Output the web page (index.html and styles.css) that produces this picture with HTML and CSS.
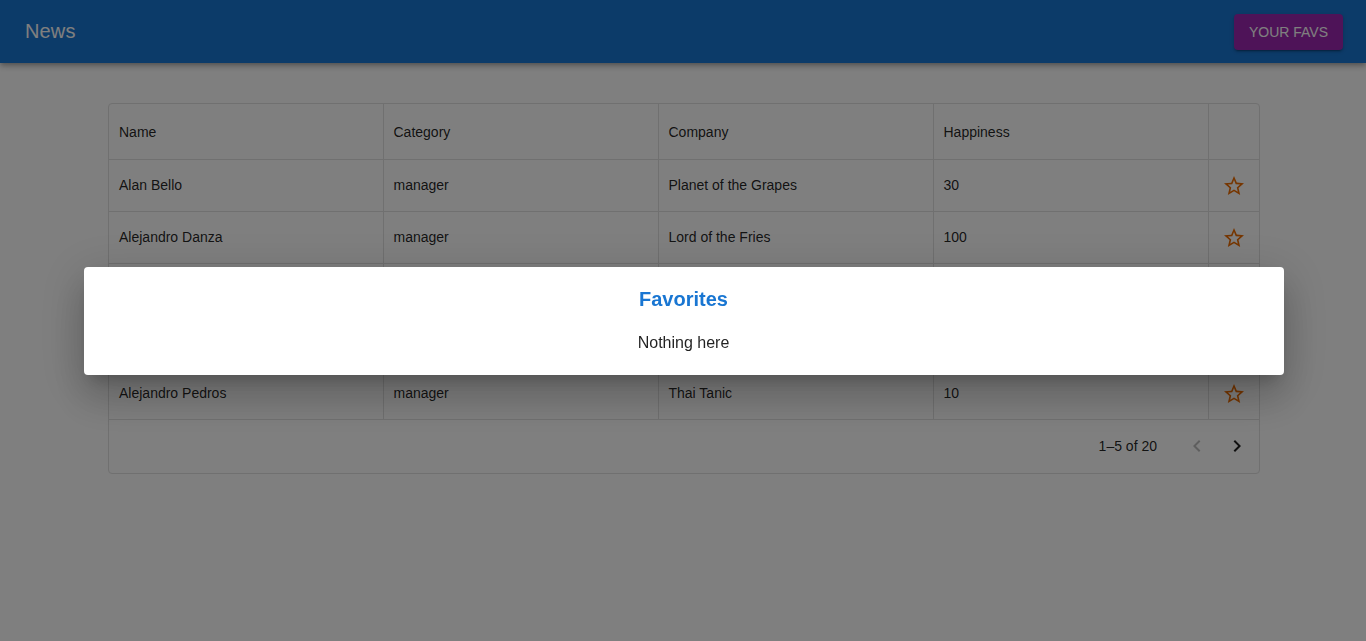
FILE: index.html
```html
<!DOCTYPE html>
<html lang="en">
<head>
<meta charset="utf-8">
<title>News</title>
<link rel="stylesheet" href="styles.css">
</head>
<body>
<header class="appbar">
  <div class="toolbar">
    <h1 class="brand">News</h1>
    <button class="btn-favs">Your favs</button>
  </div>
</header>
<main class="content">
  <div class="paper">
    <table class="grid">
      <colgroup>
        <col class="c-first"><col class="c-wide"><col class="c-wide"><col class="c-wide"><col class="c-star">
      </colgroup>
      <thead>
        <tr><th>Name</th><th>Category</th><th>Company</th><th>Happiness</th><th></th></tr>
      </thead>
      <tbody>
        <tr><td>Alan Bello</td><td>manager</td><td>Planet of the Grapes</td><td>30</td><td class="star"><svg viewBox="0 0 24 24" width="24" height="24"><path d="M22 9.24l-7.19-.62L12 2 9.19 8.63 2 9.24l5.46 4.73L5.82 21 12 17.27 18.18 21l-1.63-7.03L22 9.24zM12 15.4l-3.76 2.27 1-4.28-3.32-2.88 4.38-.38L12 6.1l1.71 4.04 4.38.38-3.32 2.88 1 4.28L12 15.4z"/></svg></td></tr>
        <tr><td>Alejandro Danza</td><td>manager</td><td>Lord of the Fries</td><td>100</td><td class="star"><svg viewBox="0 0 24 24" width="24" height="24"><path d="M22 9.24l-7.19-.62L12 2 9.19 8.63 2 9.24l5.46 4.73L5.82 21 12 17.27 18.18 21l-1.63-7.03L22 9.24zM12 15.4l-3.76 2.27 1-4.28-3.32-2.88 4.38-.38L12 6.1l1.71 4.04 4.38.38-3.32 2.88 1 4.28L12 15.4z"/></svg></td></tr>
        <tr><td></td><td></td><td></td><td></td><td></td></tr>
        <tr><td></td><td></td><td></td><td></td><td></td></tr>
        <tr><td>Alejandro Pedros</td><td>manager</td><td>Thai Tanic</td><td>10</td><td class="star"><svg viewBox="0 0 24 24" width="24" height="24"><path d="M22 9.24l-7.19-.62L12 2 9.19 8.63 2 9.24l5.46 4.73L5.82 21 12 17.27 18.18 21l-1.63-7.03L22 9.24zM12 15.4l-3.76 2.27 1-4.28-3.32-2.88 4.38-.38L12 6.1l1.71 4.04 4.38.38-3.32 2.88 1 4.28L12 15.4z"/></svg></td></tr>
      </tbody>
    </table>
    <div class="pager">
      <span class="pager-count">1–5 of 20</span>
      <div class="pager-actions">
        <button class="pager-btn disabled" aria-label="Previous page"><svg viewBox="0 0 24 24" width="24" height="24"><path d="M15.41 16.59L10.83 12l4.58-4.59L14 6l-6 6 6 6 1.41-1.41z"/></svg></button>
        <button class="pager-btn" aria-label="Next page"><svg viewBox="0 0 24 24" width="24" height="24"><path d="M8.59 16.59L13.17 12 8.59 7.41 10 6l6 6-6 6-1.41-1.41z"/></svg></button>
      </div>
    </div>
  </div>
</main>
<div class="backdrop">
  <div class="dialog" role="dialog">
    <h2 class="dialog-title">Favorites</h2>
    <p class="dialog-text">Nothing here</p>
  </div>
</div>
</body>
</html>
```

FILE: styles.css
```css
* { box-sizing: border-box; }
html, body { margin: 0; padding: 0; }
body {
  font-family: "Liberation Sans", Arial, sans-serif;
  background: #fff;
  color: rgba(0,0,0,0.87);
  height: 641px;
  overflow: hidden;
}
.appbar {
  background: #1976d2;
  color: #fff;
  box-shadow: 0 2px 4px -1px rgba(0,0,0,0.2), 0 4px 5px 0 rgba(0,0,0,0.14), 0 1px 10px 0 rgba(0,0,0,0.12);
  position: relative;
  z-index: 1;
}
.toolbar {
  height: 63px;
  display: flex;
  align-items: center;
  justify-content: space-between;
  padding: 0 23px 0 25px;
}
.brand {
  margin: 0;
  font-size: 20px;
  font-weight: 500;
  letter-spacing: 0.15px;
}
.btn-favs {
  font-family: inherit;
  background: #9c27b0;
  color: #fff;
  border: 0;
  border-radius: 4px;
  height: 36px;
  width: 109px;
  padding: 0;
  font-size: 14px;
  font-weight: 400;
  text-transform: uppercase;
  letter-spacing: 0;
  box-shadow: 0 3px 1px -2px rgba(0,0,0,0.2), 0 2px 2px 0 rgba(0,0,0,0.14), 0 1px 5px 0 rgba(0,0,0,0.12);
  margin-top: 1px;
}
.content {
  padding: 40px 106px 0 108px;
}
.paper {
  width: 1152px;
  border: 1px solid #e0e0e0;
  border-radius: 4px;
  background: #fff;
}
.grid {
  width: 100%;
  border-collapse: collapse;
  table-layout: fixed;
  font-size: 14px;
}
.c-first { width: 274px; }
.c-wide { width: 275px; }
.c-star { width: 51px; }
.grid th, .grid td {
  text-align: left;
  font-weight: 400;
  padding: 0 10px;
  border-right: 1px solid #e0e0e0;
  border-bottom: 1px solid #e0e0e0;
}
.grid th { padding-top: 2px; }
.grid th:last-child, .grid td:last-child { border-right: 0; }
.grid thead tr { height: 55px; }
.grid tbody tr { height: 52px; }
.grid td.star { padding: 0; text-align: center; }
.star svg { display: block; margin: 2px auto 0 auto; fill: #ed6c02; }
.pager {
  height: 53px;
  display: flex;
  align-items: center;
  justify-content: flex-end;
  padding-right: 2px;
  font-size: 14px;
}
.pager-count { margin-right: 20px; }
.pager-actions { display: flex; }
.pager-btn {
  width: 40px;
  height: 40px;
  border: 0;
  background: transparent;
  padding: 8px;
  display: flex;
  align-items: center;
  justify-content: center;
}
.pager-btn svg { fill: rgba(0,0,0,0.87); }
.pager-btn.disabled svg { fill: rgba(0,0,0,0.26); }
.backdrop {
  position: fixed;
  inset: 0;
  background: rgba(0,0,0,0.5);
  z-index: 10;
  display: flex;
  align-items: center;
  justify-content: center;
}
.dialog {
  width: 1200px;
  height: 108px;
  background: #fff;
  border-radius: 4px;
  box-shadow: 0 11px 15px -7px rgba(0,0,0,0.2), 0 24px 38px 3px rgba(0,0,0,0.14), 0 9px 46px 8px rgba(0,0,0,0.12);
  text-align: center;
  margin-left: 1px;
}
.dialog-title {
  margin: 0;
  padding: 16px 24px 0;
  font-size: 20px;
  line-height: 32px;
  font-weight: 700;
  color: #1976d2;
}
.dialog-text {
  margin: 16px 0 0;
  padding: 0 24px;
  font-size: 16px;
  line-height: 24px;
  color: rgba(0,0,0,0.87);
}
```
